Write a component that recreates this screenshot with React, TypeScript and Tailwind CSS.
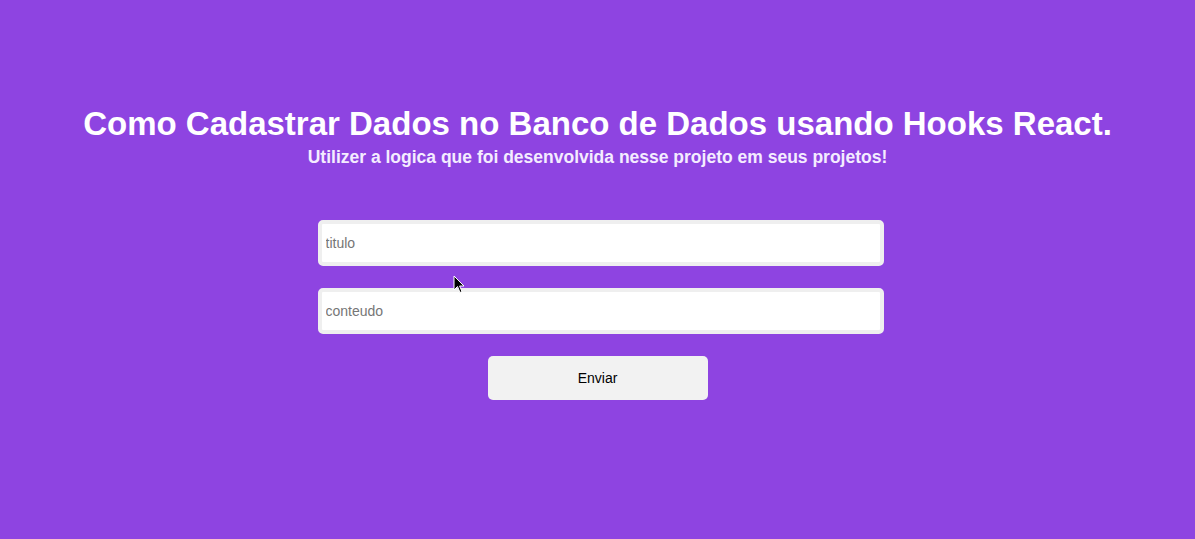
import React from "react";

export default function App() {
  return (
    <div
      className="relative w-full h-[539px] bg-[#8e44e1] flex flex-col items-center overflow-hidden"
      style={{ fontFamily: '"Liberation Sans", Arial, sans-serif' }}
    >
      <h1 className="mt-[105px] text-[33px] leading-[38px] font-bold text-white">
        Como Cadastrar Dados no Banco de Dados usando Hooks React.
      </h1>
      <p className="mt-[4px] text-[17.5px] leading-[20px] font-bold text-[#f4ecff]">
        Utilizer a logica que foi desenvolvida nesse projeto em seus projetos!
      </p>
      <form className="mt-[53px] flex flex-col items-center" onSubmit={(e) => e.preventDefault()}>
        <input
          placeholder="titulo"
          className="ml-[6px] w-[566px] h-[46px] bg-white border-[4px] border-[#efefef] rounded-[5px] px-[4px] text-[14px] text-black placeholder:text-[#767676] outline-none"
        />
        <input
          placeholder="conteudo"
          className="ml-[6px] mt-[22px] w-[566px] h-[46px] bg-white border-[4px] border-[#efefef] rounded-[5px] px-[4px] text-[14px] text-black placeholder:text-[#767676] outline-none"
        />
        <button
          type="submit"
          className="mt-[22px] w-[220px] h-[44px] bg-[#f2f2f2] rounded-[5px] text-[14px] text-black"
        >
          Enviar
        </button>
      </form>
      <svg
        className="absolute left-[453px] top-[275px]"
        width="12"
        height="19"
        viewBox="0 0 12 19"
      >
        <path d="M1 1 L1 15 L4.5 11.5 L7 17.5 L9 16.6 L6.6 11 L11 11 Z" fill="#000" stroke="#fff" strokeWidth="1" />
      </svg>
    </div>
  );
}
